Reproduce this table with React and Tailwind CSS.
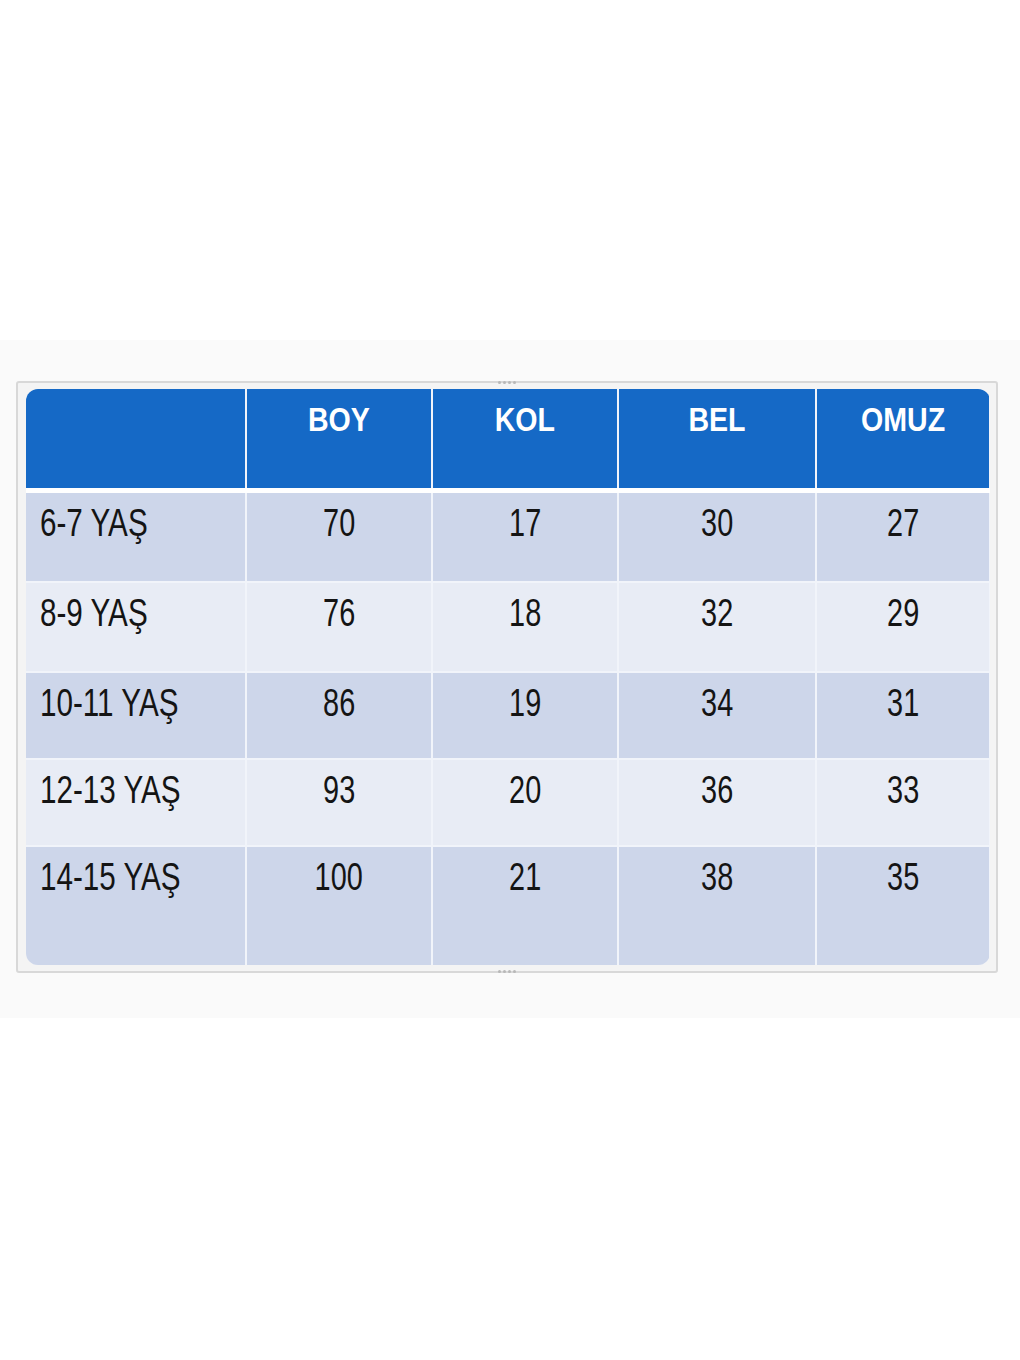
const columns = ["", "BOY", "KOL", "BEL", "OMUZ"];

const rows = [
  { label: "6-7 YAŞ", values: ["70", "17", "30", "27"], h: "h-[88px]", bg: "bg-[#cdd6ea]" },
  { label: "8-9 YAŞ", values: ["76", "18", "32", "29"], h: "h-[88px]", bg: "bg-[#e8ecf5]" },
  { label: "10-11 YAŞ", values: ["86", "19", "34", "31"], h: "h-[85px]", bg: "bg-[#cdd6ea]" },
  { label: "12-13 YAŞ", values: ["93", "20", "36", "33"], h: "h-[85px]", bg: "bg-[#e8ecf5]" },
  { label: "14-15 YAŞ", values: ["100", "21", "38", "35"], h: "h-[118px]", bg: "bg-[#cdd6ea]" },
];

const grid = "grid grid-cols-[219px_184px_184px_196px_172px] gap-x-[2px]";

function Handle({ className }) {
  return (
    <div className={"absolute flex gap-[2px] " + className}>
      <span className="h-[3px] w-[3px] rounded-full bg-[#b8b8b8]" />
      <span className="h-[3px] w-[3px] rounded-full bg-[#b8b8b8]" />
      <span className="h-[3px] w-[3px] rounded-full bg-[#b8b8b8]" />
      <span className="h-[3px] w-[3px] rounded-full bg-[#b8b8b8]" />
    </div>
  );
}

export default function App() {
  return (
    <main
      className="h-[1360px] w-[1020px] bg-white pt-[340px]"
      style={{ fontFamily: '"Liberation Sans", Arial, sans-serif' }}
    >
      <section className="h-[678px] bg-[#fafafa] pt-[41px] pl-[16px]">
        <div className="relative w-[982px] rounded-[3px] border-2 border-[#d8d8d8] bg-[#f4f4f4] pt-[6px] pb-[6px] pl-[8px] pr-[6px]">
          <Handle className="left-1/2 -top-[2px] -translate-x-1/2" />
          <Handle className="left-1/2 -bottom-[2px] -translate-x-1/2" />

          <div className="overflow-hidden rounded-[12px] bg-[#f1f4fa]">
            {/* header */}
            <div className={grid + " h-[99px]"}>
              {columns.map((c, i) => (
                <div
                  key={i}
                  className="bg-[#1569c6] pt-[13px] text-center text-[34px] leading-none font-bold text-white"
                >
                  <span className="inline-block origin-center scale-x-[0.84]">{c}</span>
                </div>
              ))}
            </div>
            <div className="h-[5px] bg-white" />

            <div className="flex flex-col gap-y-[2px]">
              {rows.map((r) => (
                <div key={r.label} className={grid + " " + r.h}>
                  <div className={r.bg + " pt-[11px] pl-[14px] text-[38px] leading-none text-[#141414]"}>
                    <span className="inline-block origin-left scale-x-[0.78] whitespace-nowrap">{r.label}</span>
                  </div>
                  {r.values.map((v, i) => (
                    <div
                      key={i}
                      className={r.bg + " pt-[11px] text-center text-[38px] leading-none text-[#141414]"}
                    >
                      <span className="inline-block origin-center scale-x-[0.76]">{v}</span>
                    </div>
                  ))}
                </div>
              ))}
            </div>
          </div>
        </div>
      </section>
    </main>
  );
}
